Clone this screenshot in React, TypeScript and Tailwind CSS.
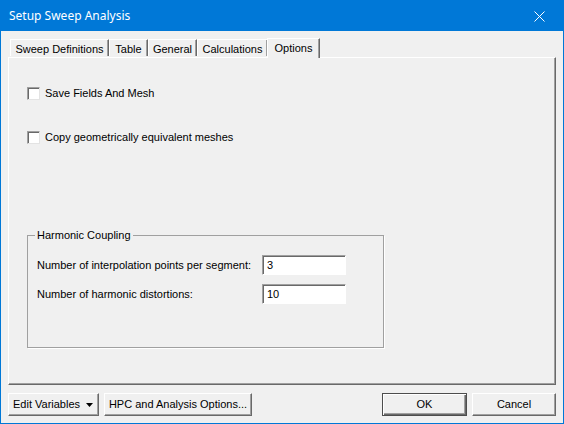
import React from "react";

const ui = { fontFamily: '"Liberation Sans", Arial, sans-serif' };

const tabs = [
  { label: "Sweep Definitions", w: "w-[99px]" },
  { label: "Table", w: "w-[39px]" },
  { label: "General", w: "w-[49px]" },
  { label: "Calculations", w: "w-[71px]" },
];

function CheckRow({ label }: { label: string }) {
  return (
    <div className="flex items-center gap-[5px] h-[13px]">
      <span className="block w-[13px] h-[13px] bg-white border border-t-[#a0a0a0] border-l-[#a0a0a0] border-r-[#e3e3e3] border-b-[#e3e3e3] shadow-[inset_1px_1px_0_#696969]" />
      <span className="leading-[13px]">{label}</span>
    </div>
  );
}

function Field({ value }: { value: string }) {
  return (
    <div className="w-[84px] h-[20px] bg-white border border-t-[#a0a0a0] border-l-[#a0a0a0] border-r-white border-b-white shadow-[inset_1px_1px_0_#696969] pl-[4px] flex items-center leading-none">
      {value}
    </div>
  );
}

const btn =
  "h-[23px] bg-[#f0f0f0] border border-t-white border-l-white border-r-[#696969] border-b-[#696969] shadow-[inset_-1px_-1px_0_#a0a0a0] flex items-center justify-center leading-none";

export default function App() {
  return (
    <div className="w-[564px] h-[424px] flex flex-col border border-[#0078d7] bg-[#f0f0f0] text-[11px] text-black" style={ui}>
      {/* title bar */}
      <div className="h-[30px] bg-[#0078d7] flex items-center justify-between text-white shrink-0">
        <span className="pl-[8px] text-[12px]" style={{ fontFamily: '"Noto Sans", sans-serif' }}>
          Setup Sweep Analysis
        </span>
        <div className="w-[46px] h-full flex items-center justify-center pr-[1px]">
          <svg width="11" height="11" viewBox="0 0 11 11">
            <path d="M0.5 0.5 L10.5 10.5 M10.5 0.5 L0.5 10.5" stroke="#fff" strokeWidth="1" fill="none" />
          </svg>
        </div>
      </div>

      <div className="flex-1 flex flex-col px-[7px] pt-[7px] pb-[7px]">
        {/* tabs */}
        <div className="flex items-end h-[19px] pl-[2px] relative z-10">
          {tabs.map((t) => (
            <div
              key={t.label}
              className={`${t.w} h-[17px] mb-[1px] flex items-center justify-center pt-[2px] border-t border-l border-t-white border-l-white border-r border-r-[#696969] shadow-[inset_-1px_0_0_#a0a0a0] leading-none`}
            >
              {t.label}
            </div>
          ))}
          <div className="w-[53px] h-[20px] -mb-[1px] -ml-[1px] bg-[#f0f0f0] flex items-start justify-center pt-[4px] border-t border-l border-t-white border-l-white border-r border-r-[#696969] shadow-[inset_-1px_0_0_#a0a0a0] leading-none">
            Options
          </div>
        </div>

        {/* panel */}
        <div className="h-[328px] flex flex-col border border-t-white border-l-white border-r-[#696969] border-b-[#696969] shadow-[inset_-1px_-1px_0_#a0a0a0] pl-[18px] pt-[29px]">
          <CheckRow label="Save Fields And Mesh" />
          <div className="mt-[31px]">
            <CheckRow label="Copy geometrically equivalent meshes" />
          </div>

          <fieldset className="mt-[85px] w-[357px] h-[119px] border border-[#a0a0a0] shadow-[1px_1px_0_#fff]">
            <legend className="ml-[7px] px-[2px] leading-[13px]">Harmonic Coupling</legend>
            <div className="grid grid-cols-[225px_84px] gap-y-[9px] items-center pl-[9px] pt-[13px]">
              <span>Number of interpolation points per segment:</span>
              <Field value="3" />
              <span>Number of harmonic distortions:</span>
              <Field value="10" />
            </div>
          </fieldset>
        </div>

        {/* buttons */}
        <div className="mt-[8px] flex items-center">
          <div className={`${btn} w-[91px] justify-start pl-[4px] gap-[6px]`}>
            <span>Edit Variables</span>
            <svg width="7" height="4" viewBox="0 0 7 4">
              <path d="M0 0 H7 L3.5 4 Z" fill="#000" />
            </svg>
          </div>
          <div className={`${btn} w-[148px] ml-[5px]`}>HPC and Analysis Options...</div>
          <div className="flex-1" />
          <div className="w-[85px] h-[23px] border border-[#4d4d4d]">
            <div className="w-full h-full flex items-center justify-center leading-none shadow-[inset_1px_1px_0_#fff,inset_-1px_-1px_0_#696969,inset_-2px_-2px_0_#a0a0a0]">
              OK
            </div>
          </div>
          <div className={`${btn} w-[84px] ml-[5px]`}>Cancel</div>
        </div>
      </div>
    </div>
  );
}
